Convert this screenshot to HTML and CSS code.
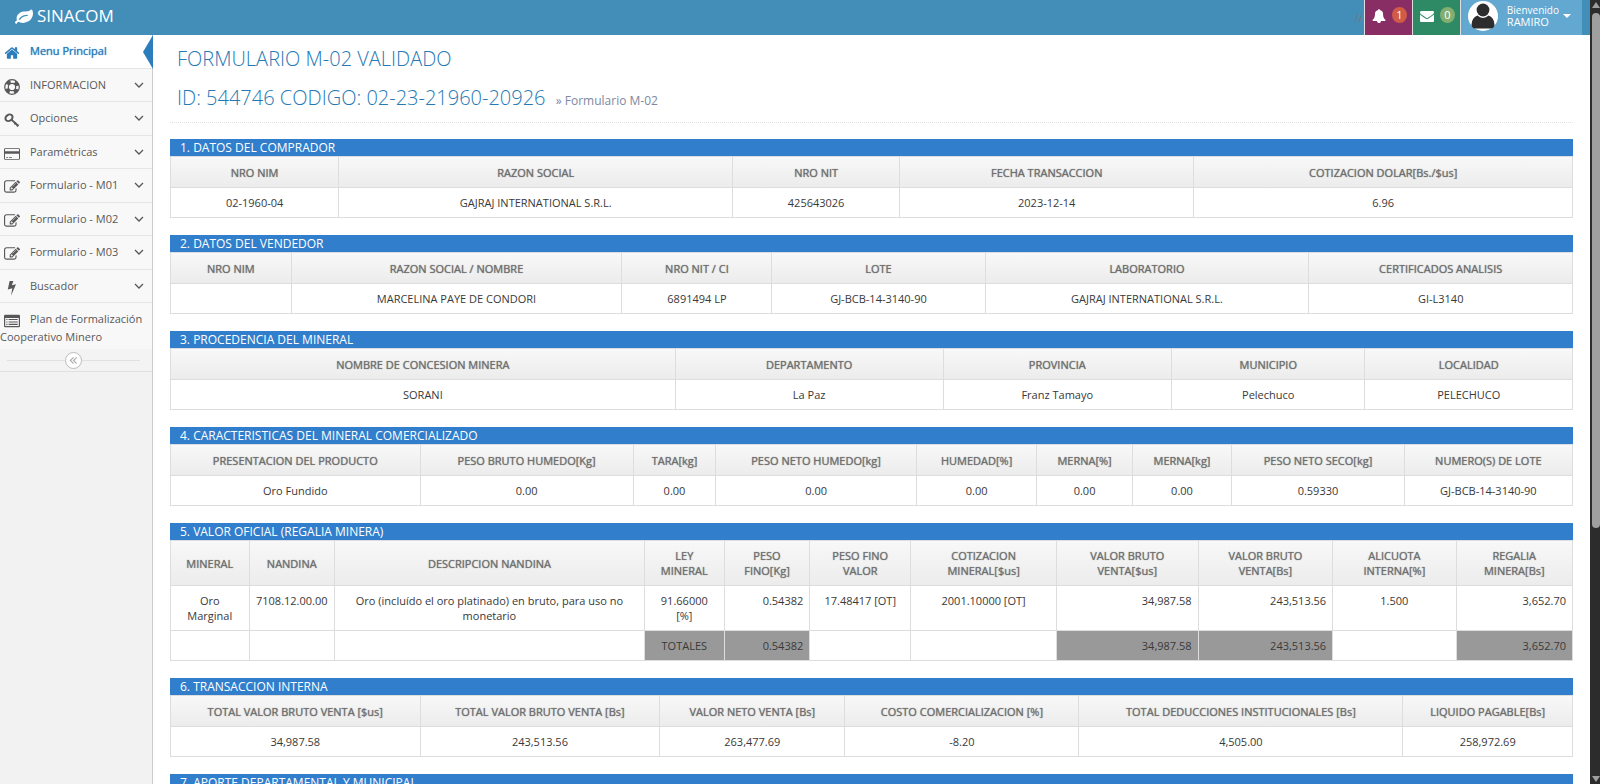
FILE: index.html
```html
<!DOCTYPE html>
<html lang="es">
<head>
<meta charset="utf-8">
<title>SINACOM - Formulario M-02</title>
<link rel="stylesheet" href="styles.css">
</head>
<body>
<svg class="sprite" aria-hidden="true">
  <symbol id="i-leaf" viewBox="0 0 1792 1792"><path d="M1280 832q0-26-19-45t-45-19q-172 0-318 49.500t-259.500 134-235.500 219.500q-19 21-19 45 0 26 19 45t45 19q24 0 45-19 27-24 74-71t67-66q137-124 268.500-176t313.500-52q26 0 45-19t19-45zm512-198q0 95-20 193-46 224-184.500 383t-357.500 268q-214 108-438 108-148 0-286-47-15-5-88-42t-96-37q-16 0-39.500 32t-45 70-52.500 70-60 32q-43 0-63.500-17.500t-45.500-59.500q-2-4-6-11t-5.500-10-3-9.500-1.500-13.500q0-35 31-73.500t68-65.500 68-56 31-48q0-4-14-38t-16-44q-9-51-9-104 0-115 43.500-220t119-184.500 170.500-139 204-95.500q55-18 145-25.500t179.500-9 178.500-6 163.500-24 113.500-56.500l29.500-29.500 29.500-28 27-20 36.500-16 43.500-4.500q39 0 70.500 46t47.500 112 24 124 8 96z"/></symbol>
  <symbol id="i-home" viewBox="0 0 1792 1792"><path d="M1472 992v480q0 26-19 45t-45 19h-384v-384h-256v384h-384q-26 0-45-19t-19-45v-480q0-1 .5-3t.5-3l575-474 575 474q1 2 1 6zm223-69l-62 74q-8 9-21 11h-3q-13 0-21-7l-692-577-692 577q-12 8-24 7-13-2-21-11l-62-74q-8-10-7-23.500t11-21.500l719-599q32-26 76-26t76 26l244 204v-195q0-14 9-23t23-9h192q14 0 23 9t9 23v408l219 182q10 8 11 21.500t-7 23.500z"/></symbol>
  <symbol id="i-ring" viewBox="0 0 16 16"><g fill="none" stroke="currentColor"><circle cx="8" cy="8" r="7.300" stroke-width="1.200"/><circle cx="8" cy="8" r="3.700" stroke-width="1.200"/><circle cx="8" cy="8" r="5.500" stroke-width="3.600" stroke-dasharray="4.320 4.320" stroke-dashoffset="-2.160"/></g></symbol>
  <symbol id="i-key" viewBox="0 0 16 16"><g fill="none" stroke="currentColor"><ellipse cx="5" cy="5.800" rx="3.800" ry="3" transform="rotate(-35 5 5.800)" stroke-width="2"/><path d="M7.200 7.500L14.500 14M10.400 12.400l1.700-2M12.800 14.400l1.600-1.900" stroke-width="1.700"/></g></symbol>
  <symbol id="i-card" viewBox="0 0 18 16"><path fill-rule="evenodd" d="M1.500 1.500h15a1.500 1.500 0 0 1 1.500 1.500v10a1.500 1.500 0 0 1-1.500 1.500h-15a1.500 1.500 0 0 1-1.500-1.500v-10a1.500 1.500 0 0 1 1.500-1.500zM1.100 2.900v1.900h15.800v-1.900l-.4-.4h-15zM1.100 7.800v5.300l.4.400h15l.4-.4v-5.300zM2.500 11.300h2v1h-2zM5.500 11.300h3.500v1h-3.500z"/></symbol>
  <symbol id="i-edit" viewBox="0 0 1792 1792"><path d="M888 1184l116-116-152-152-116 116v56h96v96h56zm440-720q-16-16-33 1l-350 350q-17 17-1 33t33-1l350-350q17-17 1-33zm80 594v190q0 119-84.500 203.500t-203.500 84.500h-832q-119 0-203.500-84.500t-84.500-203.500v-832q0-119 84.500-203.500t203.500-84.500h832q63 0 117 25 15 7 18 23 3 17-9 29l-49 49q-14 14-32 8-23-6-45-6h-832q-66 0-113 47t-47 113v832q0 66 47 113t113 47h832q66 0 113-47t47-113v-126q0-13 9-22l64-64q15-15 35-7t20 29zm-96-738l288 288-672 672h-288v-288zm444 132l-92 92-288-288 92-92q28-28 68-28t68 28l152 152q28 28 28 68t-28 68z"/></symbol>
  <symbol id="i-bolt" viewBox="0 0 16 16"><path d="M5.600 1h3.800l-1.600 4.200 4.200-1-5 11.600 1.300-7.500-4.500 1.100z"/></symbol>
  <symbol id="i-list" viewBox="0 0 16 16"><path fill-rule="evenodd" d="M1.200 1.800h13.600a1.200 1.200 0 0 1 1.200 1.200v10a1.200 1.200 0 0 1-1.200 1.200h-13.600a1.200 1.200 0 0 1-1.200-1.200v-10a1.200 1.200 0 0 1 1.200-1.200zM1.200 5v8h13.600v-8zM2.300 6h1.200v1.100h-1.200zM4.600 6h9.100v1.100h-9.100zM2.300 8.400h1.200v1.100h-1.200zM4.600 8.400h9.100v1.100h-9.100zM2.300 10.800h1.200v1.100h-1.200zM4.600 10.800h9.100v1.100h-9.100z"/></symbol>
  <symbol id="i-down" viewBox="0 0 10 10"><path d="M1 3l4 4 4-4" fill="none" stroke="currentColor" stroke-width="1.300"/></symbol>
  <symbol id="i-bell" viewBox="0 0 1792 1792"><path d="M1728 1408q0 52-38 90t-90 38h-448q0 106-75 181t-181 75-181-75-75-181h-448q-52 0-90-38t-38-90q50-42 91-88t85-119.500 74.500-158.500 50-206 19.500-260q0-152 117-282.500t307-158.500q-8-19-8-39 0-40 28-68t68-28 68 28 28 68q0 20-8 39 190 28 307 158.500t117 282.500q0 139 19.500 260t50 206 74.500 158.500 85 119.500 91 88z"/></symbol>
  <symbol id="i-mail" viewBox="0 0 1792 1792"><path d="M1792 710v794q0 66-47 113t-113 47h-1472q-66 0-113-47t-47-113v-794q44 49 101 87 362 246 497 345 57 42 92.500 65.500t94.500 48 110 24.500h2q51 0 110-24.500t94.500-48 92.500-65.500q170-123 498-345 57-39 100-87zm0-294q0 79-49 151t-122 123q-376 261-468 325-10 7-42.500 31t-54 38.500-52 32.500-57.500 27-50 9h-2q-23 0-50-9t-57.500-27-52-32.500-54-38.500-42.500-31q-91-64-262-182.500t-205-142.500q-62-42-117-115.500t-55-136.500q0-78 41.500-130t118.500-52h1472q65 0 112.500 47t47.500 113z"/></symbol>
  <symbol id="i-user" viewBox="0 0 30 30"><circle cx="15" cy="15" r="15" fill="#fff"/><circle cx="15" cy="9" r="6.400" fill="#2d2d2d"/><path fill="#2d2d2d" d="M9.500 14.600A7.700 7.700 0 0 0 20.500 14.600q5.500 2 6 8.900 0 3-3 4h-17q-3-1-3-4 .5-6.900 6-8.900z"/></symbol>
  <symbol id="i-dbl" viewBox="0 0 10 10"><path d="M5 1.500L1.500 5 5 8.500M8.500 1.500L5 5l3.500 3.500" fill="none" stroke="currentColor" stroke-width="1.200"/></symbol>
</svg>
<div class="window">
  <div class="page">
    <header class="topbar">
      <a class="brand" href="#"><svg><use href="#i-leaf"/></svg>SINACOM</a>
      <div class="tools">
        <span class="slashes">//</span>
        <button class="tool tool-bell" aria-label="Notificaciones"><svg><use href="#i-bell"/></svg><span class="badge badge-red">1</span></button>
        <button class="tool tool-mail" aria-label="Mensajes"><svg><use href="#i-mail"/></svg><span class="badge badge-green">0</span></button>
        <button class="user"><svg class="avatar"><use href="#i-user"/></svg><span class="who"><small>Bienvenido</small><span>RAMIRO</span></span><span class="caret"></span></button>
      </div>
    </header>
    <div class="body">
      <nav class="sidebar">
        <ul class="menu">
          <li class="active"><a href="#"><svg class="ico"><use href="#i-home"/></svg>Menu Principal</a></li>
          <li><a href="#"><svg class="ico"><use href="#i-ring"/></svg>INFORMACION<svg class="down"><use href="#i-down"/></svg></a></li>
          <li><a href="#"><svg class="ico"><use href="#i-key"/></svg>Opciones<svg class="down"><use href="#i-down"/></svg></a></li>
          <li><a href="#"><svg class="ico"><use href="#i-card"/></svg>Paramétricas<svg class="down"><use href="#i-down"/></svg></a></li>
          <li><a href="#"><svg class="ico"><use href="#i-edit"/></svg>Formulario - M01<svg class="down"><use href="#i-down"/></svg></a></li>
          <li><a href="#"><svg class="ico"><use href="#i-edit"/></svg>Formulario - M02<svg class="down"><use href="#i-down"/></svg></a></li>
          <li><a href="#"><svg class="ico"><use href="#i-edit"/></svg>Formulario - M03<svg class="down"><use href="#i-down"/></svg></a></li>
          <li><a href="#"><svg class="ico"><use href="#i-bolt"/></svg>Buscador<svg class="down"><use href="#i-down"/></svg></a></li>
          <li class="long"><a href="#"><svg class="ico"><use href="#i-list"/></svg>Plan de Formalización Cooperativo Minero</a></li>
        </ul>
        <div class="collapse"><button aria-label="Contraer menú"><svg><use href="#i-dbl"/></svg></button></div>
      </nav>
      <main class="content">
        <div class="page-header">
          <h1>FORMULARIO M-02 VALIDADO</h1>
          <h1>ID: 544746 CODIGO: 02-23-21960-20926 <small>» Formulario M-02</small></h1>
        </div>

        <section>
          <h2>1. DATOS DEL COMPRADOR</h2>
          <table class="t-buyer">
            <colgroup><col><col><col><col><col></colgroup>
            <thead><tr><th>NRO NIM</th><th>RAZON SOCIAL</th><th>NRO NIT</th><th>FECHA TRANSACCION</th><th>COTIZACION DOLAR[Bs./$us]</th></tr></thead>
            <tbody><tr><td>02-1960-04</td><td>GAJRAJ INTERNATIONAL S.R.L.</td><td>425643026</td><td>2023-12-14</td><td>6.96</td></tr></tbody>
          </table>
        </section>

        <section>
          <h2>2. DATOS DEL VENDEDOR</h2>
          <table class="t-seller">
            <colgroup><col><col><col><col><col><col></colgroup>
            <thead><tr><th>NRO NIM</th><th>RAZON SOCIAL / NOMBRE</th><th>NRO NIT / CI</th><th>LOTE</th><th>LABORATORIO</th><th>CERTIFICADOS ANALISIS</th></tr></thead>
            <tbody><tr><td></td><td>MARCELINA PAYE DE CONDORI</td><td>6891494 LP</td><td>GJ-BCB-14-3140-90</td><td>GAJRAJ INTERNATIONAL S.R.L.</td><td>GI-L3140</td></tr></tbody>
          </table>
        </section>

        <section>
          <h2>3. PROCEDENCIA DEL MINERAL</h2>
          <table class="t-origin">
            <colgroup><col><col><col><col><col></colgroup>
            <thead><tr><th>NOMBRE DE CONCESION MINERA</th><th>DEPARTAMENTO</th><th>PROVINCIA</th><th>MUNICIPIO</th><th>LOCALIDAD</th></tr></thead>
            <tbody><tr><td>SORANI</td><td>La Paz</td><td>Franz Tamayo</td><td>Pelechuco</td><td>PELECHUCO</td></tr></tbody>
          </table>
        </section>

        <section>
          <h2>4. CARACTERISTICAS DEL MINERAL COMERCIALIZADO</h2>
          <table class="t-mineral">
            <colgroup><col><col><col><col><col><col><col><col><col></colgroup>
            <thead><tr><th>PRESENTACION DEL PRODUCTO</th><th>PESO BRUTO HUMEDO[Kg]</th><th>TARA[kg]</th><th>PESO NETO HUMEDO[kg]</th><th>HUMEDAD[%]</th><th>MERNA[%]</th><th>MERNA[kg]</th><th>PESO NETO SECO[kg]</th><th>NUMERO(S) DE LOTE</th></tr></thead>
            <tbody><tr><td>Oro Fundido</td><td>0.00</td><td>0.00</td><td>0.00</td><td>0.00</td><td>0.00</td><td>0.00</td><td>0.59330</td><td>GJ-BCB-14-3140-90</td></tr></tbody>
          </table>
        </section>

        <section>
          <h2>5. VALOR OFICIAL (REGALIA MINERA)</h2>
          <table class="t-value">
            <colgroup><col><col><col><col><col><col><col><col><col><col><col></colgroup>
            <thead><tr><th>MINERAL</th><th>NANDINA</th><th>DESCRIPCION NANDINA</th><th>LEY MINERAL</th><th>PESO FINO[Kg]</th><th>PESO FINO<br>VALOR</th><th>COTIZACION MINERAL[$us]</th><th>VALOR BRUTO VENTA[$us]</th><th>VALOR BRUTO VENTA[Bs]</th><th>ALICUOTA INTERNA[%]</th><th>REGALIA MINERA[Bs]</th></tr></thead>
            <tbody>
              <tr><td>Oro Marginal</td><td>7108.12.00.00</td><td>Oro (incluído el oro platinado) en bruto, para uso no monetario</td><td>91.66000<br>[%]</td><td class="num">0.54382</td><td>17.48417 [OT]</td><td>2001.10000 [OT]</td><td class="num">34,987.58</td><td class="num">243,513.56</td><td>1.500</td><td class="num">3,652.70</td></tr>
              <tr><td></td><td></td><td></td><td class="total">TOTALES</td><td class="num total">0.54382</td><td></td><td></td><td class="num total">34,987.58</td><td class="num total">243,513.56</td><td></td><td class="num total">3,652.70</td></tr>
            </tbody>
          </table>
        </section>

        <section>
          <h2>6. TRANSACCION INTERNA</h2>
          <table class="t-internal">
            <colgroup><col><col><col><col><col><col></colgroup>
            <thead><tr><th>TOTAL VALOR BRUTO VENTA [$us]</th><th>TOTAL VALOR BRUTO VENTA [Bs]</th><th>VALOR NETO VENTA [Bs]</th><th>COSTO COMERCIALIZACION [%]</th><th>TOTAL DEDUCCIONES INSTITUCIONALES [Bs]</th><th>LIQUIDO PAGABLE[Bs]</th></tr></thead>
            <tbody><tr><td>34,987.58</td><td>243,513.56</td><td>263,477.69</td><td>-8.20</td><td>4,505.00</td><td>258,972.69</td></tr></tbody>
          </table>
        </section>

        <section>
          <h2>7. APORTE DEPARTAMENTAL Y MUNICIPAL</h2>
        </section>
      </main>
    </div>
  </div>
  <div class="scrollbar" aria-hidden="true"><span class="arrow up"></span><span class="thumb"></span><span class="arrow dn"></span></div>
</div>
</body>
</html>
```
FILE: styles.css
```css
* { box-sizing: border-box; }
body {
  margin: 0;
  font-family: "Open Sans", "Liberation Sans", sans-serif;
  font-size: 11px;
  line-height: 15px;
  color: #393939;
  background: #fff;
}
svg { fill: currentColor; flex: none; }
button { font: inherit; color: inherit; border: 0; padding: 0; cursor: pointer; }
a { color: inherit; text-decoration: none; }
.sprite { display: none; }

.window { display: flex; height: 100vh; overflow: hidden; }
.page { flex: 1; min-width: 0; display: flex; flex-direction: column; }

.topbar {
  flex: none;
  height: 35px;
  display: flex;
  justify-content: space-between;
  background: #438eb9;
  color: #fff;
  padding-right: 8px;
}
.brand { display: flex; align-items: center; gap: 4px; padding: 0 0 4px 15px; font-size: 17px; }
.brand svg { width: 18px; height: 18px; }
.tools { display: flex; }
.slashes { align-self: center; font-size: 11px; color: #777; padding-right: 1px; }
.tool {
  width: 48px;
  display: flex;
  align-items: center;
  justify-content: flex-end;
  gap: 6px;
  border-left: 1px solid #ddd;
  color: #fff;
  padding: 0 5px 6px 0;
}
.tool svg { width: 14px; height: 14px; margin-top: 2px; }
.tool-bell { background: #892e65; }
.tool-mail { background: #2e8965; }
.badge { width: 15px; height: 16px; border-radius: 50%; font-size: 11px; line-height: 15px; }
.badge-red { background: #d15b47; }
.badge-green { background: #82af6f; }
.user {
  display: flex;
  align-items: center;
  background: #62a8d1;
  border-left: 1px solid #ddd;
  padding: 0 11px 4px 7px;
  color: #fff;
  text-align: left;
}
.avatar { width: 30px; height: 30px; }
.who { display: flex; flex-direction: column; padding-left: 9px; line-height: 12px; font-size: 11px; }
.who small { font-size: 10px; }
.caret { border: 4px solid transparent; border-top-color: #fff; border-bottom: 0; margin-left: 4px; }

.body { flex: 1; min-height: 0; display: flex; }
.sidebar { flex: none; width: 153px; background: #f2f2f2; border-right: 1px solid #ccc; }
.menu { list-style: none; margin: 0; padding: 0; }
.menu li { position: relative; height: 33px; background: #f8f8f8; border-bottom: 1px solid #e5e5e5; color: #585858; }
.menu li:nth-child(odd) { height: 34px; }
.menu li:nth-child(odd).long { height: auto; border: 0; }
.menu a { display: block; line-height: 31px; padding-left: 4px; }
.menu .ico { width: 16px; height: 16px; vertical-align: -6px; margin-right: 10px; }
.menu .down { position: absolute; right: 8px; top: 11px; width: 10px; height: 10px; }
.menu li.active { background: #fff; color: #2b7dbc; text-shadow: 0 0 1px #2b7dbc; }
.menu li.active::after {
  content: "";
  position: absolute;
  right: -1px;
  top: 0;
  border: 17px solid transparent;
  border-right: 10px solid #2b7dbc;
  border-left: 0;
}
.menu .long a { line-height: 16px; padding: 8px 0 4px; }
.menu .long .ico { margin-left: 4px; }
.collapse {
  display: flex;
  align-items: center;
  height: 23px;
  background: #f3f3f3;
  border-bottom: 1px solid #e0e0e0;
  padding: 0 12px 0 7px;
}
.collapse::before, .collapse::after { content: ""; flex: 1; border-top: 1px solid #e0e0e0; }
.collapse button {
  width: 17px;
  height: 17px;
  border: 1px solid #bbb;
  border-radius: 50%;
  background: #fff;
  color: #aaa;
  display: flex;
  align-items: center;
  justify-content: center;
}
.collapse svg { width: 9px; height: 9px; }

.content { flex: 1; min-width: 0; padding: 4px 17px 0; overflow: hidden; }
.page-header { border-bottom: 1px dotted #e2e2e2; padding: 0 7px 2px; margin-bottom: 16px; }
h1 { margin: 0; font-size: 20px; line-height: 39px; font-weight: 300; color: #2679b5; }
h1 small { font-size: 12px; font-weight: 400; color: #8089a0; margin-left: 5px; }
section { margin-bottom: 17px; }
h2 { margin: 0; padding-left: 10px; font-size: 12px; line-height: 17px; font-weight: 400; color: #fff; background: #307ecc; }

table { width: 100%; table-layout: fixed; border-collapse: separate; border-spacing: 0; border: 1px solid #ddd; border-width: 1px 0 0 1px; }
th, td { padding: 7px 6px; border: 1px solid #ddd; border-width: 0 1px 1px 0; text-align: center; vertical-align: top; height: 30px; }
th {
  height: 31px;
  vertical-align: middle;
  font-weight: 400;
  color: #707070;
  text-shadow: 0 0 1px #707070;
  background: linear-gradient(#f8f8f8, #ececec);
}
.num { text-align: right; }
.total { background: #999; }

.t-buyer col:nth-child(1) { width: 12%; }
.t-buyer col:nth-child(2) { width: 28.1%; }
.t-buyer col:nth-child(3) { width: 11.9%; }
.t-buyer col:nth-child(4) { width: 21%; }

.t-seller col:nth-child(1) { width: 8.6%; }
.t-seller col:nth-child(2) { width: 23.6%; }
.t-seller col:nth-child(3) { width: 10.7%; }
.t-seller col:nth-child(4) { width: 15.2%; }
.t-seller col:nth-child(5) { width: 23.1%; }

.t-origin col:nth-child(1) { width: 36%; }
.t-origin col:nth-child(2) { width: 19.1%; }
.t-origin col:nth-child(3) { width: 16.3%; }
.t-origin col:nth-child(4) { width: 13.8%; }

.t-mineral col:nth-child(1) { width: 17.8%; }
.t-mineral col:nth-child(2) { width: 15.2%; }
.t-mineral col:nth-child(3) { width: 5.9%; }
.t-mineral col:nth-child(4) { width: 14.3%; }
.t-mineral col:nth-child(5) { width: 8.6%; }
.t-mineral col:nth-child(6) { width: 6.8%; }
.t-mineral col:nth-child(7) { width: 7.1%; }
.t-mineral col:nth-child(8) { width: 12.3%; }

.t-value col:nth-child(1) { width: 5.6%; }
.t-value col:nth-child(2) { width: 6.1%; }
.t-value col:nth-child(3) { width: 22.1%; }
.t-value col:nth-child(4) { width: 5.7%; }
.t-value col:nth-child(5) { width: 6.1%; }
.t-value col:nth-child(6) { width: 7.2%; }
.t-value col:nth-child(7) { width: 10.4%; }
.t-value col:nth-child(8) { width: 10.1%; }
.t-value col:nth-child(9) { width: 9.6%; }
.t-value col:nth-child(10) { width: 8.8%; }

.t-internal col:nth-child(1) { width: 17.8%; }
.t-internal col:nth-child(2) { width: 17.1%; }
.t-internal col:nth-child(3) { width: 13.2%; }
.t-internal col:nth-child(4) { width: 16.7%; }
.t-internal col:nth-child(5) { width: 23.1%; }

.scrollbar { flex: none; width: 10px; background: #2c2c2c; display: flex; flex-direction: column; align-items: center; padding: 2px 0 2px 2px; }
.thumb { width: 8px; height: 66%; margin: 5px 0 auto; background: #9f9f9f; border-radius: 4px; }
.arrow { border: 4px solid transparent; }
.up { border-bottom: 6px solid #9f9f9f; border-top: 0; }
.dn { border-top: 6px solid #9f9f9f; border-bottom: 0; }
```
